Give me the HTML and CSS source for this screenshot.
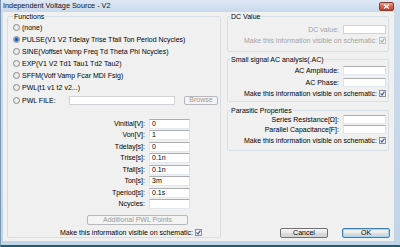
FILE: index.html
```html
<!DOCTYPE html>
<html>
<head>
<meta charset="utf-8">
<link rel="stylesheet" href="styles.css">
</head>
<body>
<div class="window">
  <div class="titlebar">
    <span class="title">Independent Voltage Source - V2</span>
    <span class="close"><svg width="7" height="5" viewBox="0 0 7 5"><path d="M1 0.5 L6 4.5 M6 0.5 L1 4.5" stroke="#fff" stroke-width="1.3"/></svg></span>
  </div>
  <div class="content">
    <fieldset class="group functions">
      <legend class="legend-wide">Functions</legend>
      <div class="radios">
        <div class="radio-row"><span class="radio"></span><span>(none)</span></div>
        <div class="radio-row"><span class="radio on"></span><span>PULSE(V1 V2 Tdelay Trise Tfall Ton Period Ncycles)</span></div>
        <div class="radio-row"><span class="radio"></span><span>SINE(Voffset Vamp Freq Td Theta Phi Ncycles)</span></div>
        <div class="radio-row"><span class="radio"></span><span>EXP(V1 V2 Td1 Tau1 Td2 Tau2)</span></div>
        <div class="radio-row"><span class="radio"></span><span>SFFM(Voff Vamp Fcar MDI Fsig)</span></div>
        <div class="radio-row"><span class="radio"></span><span>PWL(t1 v1 t2 v2...)</span></div>
        <div class="radio-row file-row"><span class="radio"></span><span class="file-label">PWL FILE:</span><span class="field disabled file-input"></span><span class="btn disabled browse">Browse</span></div>
      </div>
      <div class="params">
        <span class="plabel">Vinitial[V]:</span><span class="field">0</span>
        <span class="plabel">Von[V]:</span><span class="field">1</span>
        <span class="plabel">Tdelay[s]:</span><span class="field">0</span>
        <span class="plabel">Trise[s]:</span><span class="field">0.1n</span>
        <span class="plabel">Tfall[s]:</span><span class="field">0.1n</span>
        <span class="plabel">Ton[s]:</span><span class="field">3m</span>
        <span class="plabel">Tperiod[s]:</span><span class="field">0.1s</span>
        <span class="plabel">Ncycles:</span><span class="field"></span>
      </div>
      <div class="btn disabled addpwl">Additional PWL Points</div>
      <div class="visible-row left-visible">
        <span>Make this information visible on schematic:</span>
        <svg class="check" width="7" height="7" viewBox="0 0 7 7"><rect x=".5" y=".5" width="6" height="6" fill="#f2f2f2" stroke="#8e8f8f"/><path d="M1.6 3.4 L3 5 L5.4 1.6" fill="none" stroke="#3157a8" stroke-width="1.1"/></svg>
      </div>
    </fieldset>

    <div class="right">
      <fieldset class="group dc">
        <legend>DC Value</legend>
        <div class="frow first"><span class="muted">DC value:</span><span class="field disabled rfield"></span></div>
        <div class="visible-row rvis dc-vis">
          <span class="muted">Make this information visible on schematic:</span>
          <svg class="check" width="7" height="7" viewBox="0 0 7 7"><rect x=".5" y=".5" width="6" height="6" fill="#f4f4f4" stroke="#c2c2c2"/><path d="M1.6 3.4 L3 5 L5.4 1.6" fill="none" stroke="#a6a6a6" stroke-width="1.1"/></svg>
        </div>
      </fieldset>

      <fieldset class="group ac">
        <legend>Small signal AC analysis(.AC)</legend>
        <div class="frow ac-first"><span>AC Amplitude:</span><span class="field rfield"></span></div>
        <div class="frow ac-second"><span>AC Phase:</span><span class="field rfield"></span></div>
        <div class="visible-row rvis">
          <span>Make this information visible on schematic:</span>
          <svg class="check" width="7" height="7" viewBox="0 0 7 7"><rect x=".5" y=".5" width="6" height="6" fill="#f2f2f2" stroke="#8e8f8f"/><path d="M1.6 3.4 L3 5 L5.4 1.6" fill="none" stroke="#3157a8" stroke-width="1.1"/></svg>
        </div>
      </fieldset>

      <fieldset class="group para">
        <legend>Parasitic Properties</legend>
        <div class="frow"><span>Series Resistance[Ω]:</span><span class="field rfield"></span></div>
        <div class="frow para-second"><span>Parallel Capacitance[F]:</span><span class="field rfield"></span></div>
        <div class="visible-row rvis">
          <span>Make this information visible on schematic:</span>
          <svg class="check" width="7" height="7" viewBox="0 0 7 7"><rect x=".5" y=".5" width="6" height="6" fill="#f2f2f2" stroke="#8e8f8f"/><path d="M1.6 3.4 L3 5 L5.4 1.6" fill="none" stroke="#3157a8" stroke-width="1.1"/></svg>
        </div>
      </fieldset>

      <div class="buttons">
        <span class="btn">Cancel</span>
        <span class="btn default">OK</span>
      </div>
    </div>
  </div>
</div>
</body>
</html>
```

FILE: styles.css
```css
* { box-sizing: border-box; }
html, body { margin: 0; padding: 0; }
body {
  width: 400px;
  height: 247px;
  overflow: hidden;
  font-family: "Liberation Sans", Arial, sans-serif;
  font-size: 7px;
  color: #000;
  background: #c4d6ea;
}
.window {
  width: 400px;
  height: 247px;
  display: flex;
  flex-direction: column;
  background: linear-gradient(#cddced, #c2d4e8);
  border-left: 1px solid #7d97b2;
  border-bottom: 2px solid #1d5c73;
}
.titlebar {
  height: 12px;
  flex: none;
  display: flex;
  align-items: center;
  justify-content: space-between;
  padding: 0 6px 0 2px;
  background: linear-gradient(#dde8f4, #c9d9eb);
}
.title {
  font-size: 7.3px;
  line-height: 12px;
  color: #111;
}
.close {
  width: 15px;
  height: 9px;
  margin-top: 1px;
  border-radius: 2px;
  border: 1px solid #8a3a30;
  background: linear-gradient(#e9a79b, #d3624f 50%, #c1402c);
  display: flex;
  align-items: center;
  justify-content: center;
}
.content {
  height: 229px;
  flex: none;
  margin: 0 6px 0 2px;
  background: #f0f0f0;
  display: flex;
  gap: 6px;
  padding: 0 4px 3px 4px;
}
.group {
  margin: 0;
  padding: 0;
  border: 1px solid #d5dfe5;
  border-radius: 2px;
  min-width: 0;
}
.group legend {
  line-height: 9px;
  height: 9px;
  padding: 0 1px;
  margin-left: 2px;
}
.group legend.legend-wide { margin-left: 5px; }

/* functions */
.functions {
  width: 214px;
  flex: none;
  display: flex;
  flex-direction: column;
}
.radios {
  display: flex;
  flex-direction: column;
  padding-left: 5px;
}
.radio-row {
  height: 12px;
  display: flex;
  align-items: center;
  gap: 2px;
  white-space: nowrap;
}
.radio {
  width: 7px;
  height: 7px;
  flex: none;
  border-radius: 50%;
  border: 1px solid #8b8b8b;
  background: radial-gradient(circle, #f7f7f7 0, #dedede 100%);
}
.radio.on {
  background: radial-gradient(circle, #1c4f8f 0, #2d68b0 1.4px, #86b3e4 2.3px, #e8e8e8 2.7px);
}
.file-row { margin-top: 1px; }
.file-label { width: 45px; flex: none; }
.field {
  height: 10px;
  border: 1px solid #abadb3;
  border-color: #abadb3 #dbdfe6 #e3e9ef #e2e3ea;
  background: #fff;
  padding: 0 2px;
  line-height: 8px;
  display: block;
}
.field.disabled {
  border-color: #cfd3d8;
  background: #fff;
}
.file-input { width: 106px; height: 9px; flex: none; }
.btn {
  display: flex;
  align-items: center;
  justify-content: center;
  height: 10px;
  border: 1px solid #707070;
  border-radius: 2px;
  background: linear-gradient(#f6f6f6, #e9e9e9 50%, #dcdcdc 51%, #d3d3d3);
  color: #000;
  line-height: 8px;
}
.btn.disabled {
  border-color: #b5b9bd;
  background: #f4f4f4;
  color: #9a9a9a;
}
.browse { width: 34px; height: 9px; margin-left: 7px; flex: none; }
.params {
  margin-top: 13px;
  display: grid;
  grid-template-columns: 137px 41px;
  column-gap: 4px;
  row-gap: 1.43px;
}
.plabel {
  text-align: right;
  line-height: 10px;
  white-space: nowrap;
}
.addpwl {
  margin-top: 6px;
  margin-left: 79px;
  width: 101px;
}
.visible-row {
  display: flex;
  align-items: center;
  justify-content: flex-end;
  gap: 2px;
  height: 9px;
  white-space: nowrap;
}
.left-visible {
  margin-top: 3px;
  margin-right: 18px;
}
.check { flex: none; display: block; }

/* right column */
.right {
  width: 163px;
  flex: none;
  display: flex;
  flex-direction: column;
}
.right .group {
  width: 162px;
  padding: 0 2px 0 0;
}
.frow {
  display: flex;
  align-items: center;
  justify-content: flex-end;
  gap: 4px;
  white-space: nowrap;
}
.rfield { width: 43px; height: 9px; }
.muted { color: #a3a3a3; }
.dc .first { margin-top: 4px; }
.dc-vis { margin-top: 4px; }
.dc { padding-bottom: 6px !important; }
.ac { margin-top: 3px; padding-bottom: 3px !important; }
.ac-first { margin-top: 2px; }
.ac-second { margin-top: 3px; }
.rvis { margin-top: 2px; }
.para { margin-top: 4px; padding-bottom: 5px !important; }
.para-second { margin-top: 1px; }
.buttons {
  margin-top: auto;
  display: flex;
  justify-content: flex-end;
  gap: 14px;
}
.buttons .btn { width: 48px; }
.btn.default {
  border-color: #3c7fb1;
  box-shadow: inset 0 0 0 1px #9fd5f5;
}
```
